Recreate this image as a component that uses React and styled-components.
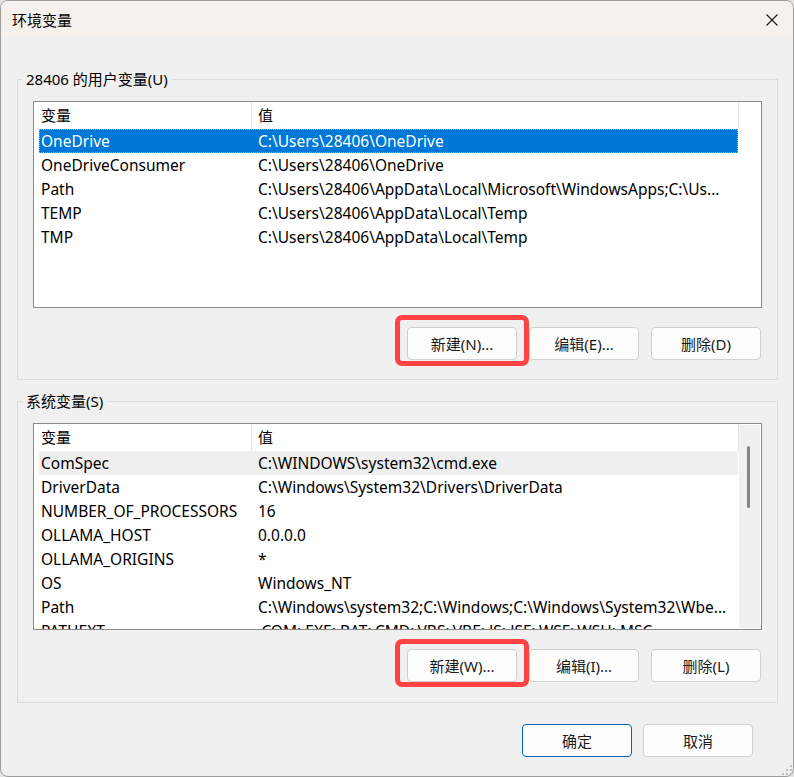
import React from "react";
import styled, { createGlobalStyle } from "styled-components";

const Global = createGlobalStyle`
  html, body { margin: 0; padding: 0; background: #e4e4e4; }
  #root { width: 794px; height: 777px; }
  * { box-sizing: border-box; }
`;

const FONT = `"Noto Sans", "Noto Sans CJK SC", sans-serif`;

const Window = styled.div`
  position: relative;
  width: 794px;
  height: 777px;
  border: 1px solid #9c9c9c;
  border-radius: 8px;
  overflow: hidden;
  background: #f0f0f0;
  display: flex;
  flex-direction: column;
  font-family: ${FONT};
  color: #000;
`;

const TitleBar = styled.div`
  height: 37px;
  flex: none;
  background: #f6f1ec;
  display: flex;
  align-items: center;
  justify-content: space-between;
  padding: 0 15px 0 11px;
`;

const Title = styled.div`
  font-family: "Noto Sans CJK SC", sans-serif;
  font-size: 15px;
  line-height: 20px;
`;

const CloseIcon = styled.svg`
  width: 12px;
  height: 12px;
  display: block;
  margin-top: 1px;
`;

const Body = styled.div`
  flex: 1;
  display: flex;
  flex-direction: column;
  padding: 31px 15px 0 16px;
`;

const GroupBox = styled.fieldset`
  margin: 0 0 ${(p) => p.$mb || 0}px 0;
  min-width: 0;
  border: 1px solid #dcdcdc;
  padding: 12px 15px ${(p) => p.$pb}px 15px;
`;

const Legend = styled.legend`
  font-size: 15px;
  line-height: 20px;
  padding: 0 4px;
  margin-left: -11px;
`;

const ListBox = styled.div`
  height: 207px;
  border: 1px solid #8a8a8a;
  background: #fff;
  display: flex;
  overflow: hidden;
`;

const Table = styled.div`
  flex: 1;
  min-width: 0;
  overflow: hidden;
`;

const HeaderRow = styled.div`
  display: grid;
  grid-template-columns: 218px 487px;
  height: ${(p) => p.$h}px;
`;

const HeaderCell = styled.div`
  font-size: 15px;
  line-height: 26px;
  padding-left: ${(p) => p.$pl}px;
  border-right: 1px solid #e5e5e5;
  white-space: nowrap;
`;

const Row = styled.div`
  display: grid;
  grid-template-columns: 212px 487px;
  margin-left: 5px;
  width: 699px;
  height: 24px;
  font-size: 15.5px;
  line-height: 23px;
  padding-top: 1px;
  background: ${(p) => (p.$selected ? "#0078d7" : p.$hover ? "#efefef" : "transparent")};
  color: ${(p) => (p.$selected ? "#fff" : "#000")};
  outline: ${(p) => (p.$selected ? "1px dotted #e59a55" : "none")};
  outline-offset: -1px;
`;

const Cell = styled.div`
  padding-left: ${(p) => p.$pl}px;
  white-space: nowrap;
  overflow: hidden;
`;

const ScrollTrack = styled.div`
  flex: none;
  width: 21px;
  margin: 1px 1px 1px 0;
  background: #f0f0f0;
  padding: 21px 0 0 8px;
`;

const ScrollThumb = styled.div`
  width: 3px;
  height: 62px;
  border-radius: 2px;
  background: #858585;
`;

const ButtonRow = styled.div`
  display: flex;
  justify-content: flex-end;
  gap: 12px;
  margin-top: 19px;
  padding-right: 1px;
`;

const Button = styled.button`
  width: 110px;
  height: 33px;
  padding: 0;
  border: 1px solid ${(p) => (p.$default ? "#0067c0" : "#d0d0d0")};
  border-radius: 4px;
  background: #fdfdfd;
  font-family: ${FONT};
  font-size: 15px;
  color: #1a1a1a;
  line-height: 20px;
`;

const Highlight = styled.div`
  position: relative;
  display: flex;
  &::after {
    content: "";
    position: absolute;
    top: -${(p) => p.$t}px;
    bottom: -${(p) => p.$b}px;
    left: -12px;
    right: -12px;
    border: 5px solid #ff4242;
    border-radius: 7px;
    pointer-events: none;
  }
`;

const Footer = styled.div`
  display: flex;
  justify-content: flex-end;
  gap: 11px;
  margin-top: 21px;
  padding-right: 25px;
`;

const Grip = styled.svg`
  position: absolute;
  right: 0;
  bottom: 0;
  width: 12px;
  height: 12px;
`;

const userVars = [
  ["OneDrive", "C:\\Users\\28406\\OneDrive"],
  ["OneDriveConsumer", "C:\\Users\\28406\\OneDrive"],
  ["Path", "C:\\Users\\28406\\AppData\\Local\\Microsoft\\WindowsApps;C:\\Us..."],
  ["TEMP", "C:\\Users\\28406\\AppData\\Local\\Temp"],
  ["TMP", "C:\\Users\\28406\\AppData\\Local\\Temp"],
];

const sysVars = [
  ["ComSpec", "C:\\WINDOWS\\system32\\cmd.exe"],
  ["DriverData", "C:\\Windows\\System32\\Drivers\\DriverData"],
  ["NUMBER_OF_PROCESSORS", "16"],
  ["OLLAMA_HOST", "0.0.0.0"],
  ["OLLAMA_ORIGINS", "*"],
  ["OS", "Windows_NT"],
  ["Path", "C:\\Windows\\system32;C:\\Windows;C:\\Windows\\System32\\Wbe..."],
  ["PATHEXT", ".COM;.EXE;.BAT;.CMD;.VBS;.VBE;.JS;.JSE;.WSF;.WSH;.MSC"],
];

function VarList({ rows, selected, hover, scroll, headerH }) {
  return (
    <ListBox>
      <Table>
        <HeaderRow $h={headerH}>
          <HeaderCell $pl={7}>变量</HeaderCell>
          <HeaderCell $pl={6}>值</HeaderCell>
        </HeaderRow>
        {rows.map(([k, v], i) => (
          <Row key={k + i} $selected={i === selected} $hover={i === hover}>
            <Cell $pl={2}>{k}</Cell>
            <Cell $pl={7}>{v}</Cell>
          </Row>
        ))}
      </Table>
      {scroll && (
        <ScrollTrack>
          <ScrollThumb />
        </ScrollTrack>
      )}
    </ListBox>
  );
}

export default function App() {
  return (
    <>
      <Global />
      <Window>
        <TitleBar>
          <Title>环境变量</Title>
          <CloseIcon viewBox="0 0 12 12">
            <path d="M0.5 0.5 L11.5 11.5 M11.5 0.5 L0.5 11.5" stroke="#1a1a1a" strokeWidth="1.1" fill="none" />
          </CloseIcon>
        </TitleBar>
        <Body>
          <GroupBox $pb={19} $mb={11}>
            <Legend>28406 的用户变量(U)</Legend>
            <VarList rows={userVars} selected={0} headerH={27} />
            <ButtonRow>
              <Highlight $t={12} $b={6}>
                <Button>新建(N)...</Button>
              </Highlight>
              <Button>编辑(E)...</Button>
              <Button>删除(D)</Button>
            </ButtonRow>
          </GroupBox>
          <GroupBox $pb={20}>
            <Legend>系统变量(S)</Legend>
            <VarList rows={sysVars} hover={0} scroll headerH={27} />
            <ButtonRow>
              <Highlight $t={10} $b={5}>
                <Button>新建(W)...</Button>
              </Highlight>
              <Button>编辑(I)...</Button>
              <Button>删除(L)</Button>
            </ButtonRow>
          </GroupBox>
          <Footer>
            <Button $default>确定</Button>
            <Button>取消</Button>
          </Footer>
        </Body>
        <Grip viewBox="0 0 12 12">
          <g fill="#bdbdbd">
            <rect x="9" y="1" width="2" height="2" />
            <rect x="5" y="5" width="2" height="2" />
            <rect x="9" y="5" width="2" height="2" />
            <rect x="1" y="9" width="2" height="2" />
            <rect x="5" y="9" width="2" height="2" />
            <rect x="9" y="9" width="2" height="2" />
          </g>
        </Grip>
      </Window>
    </>
  );
}
